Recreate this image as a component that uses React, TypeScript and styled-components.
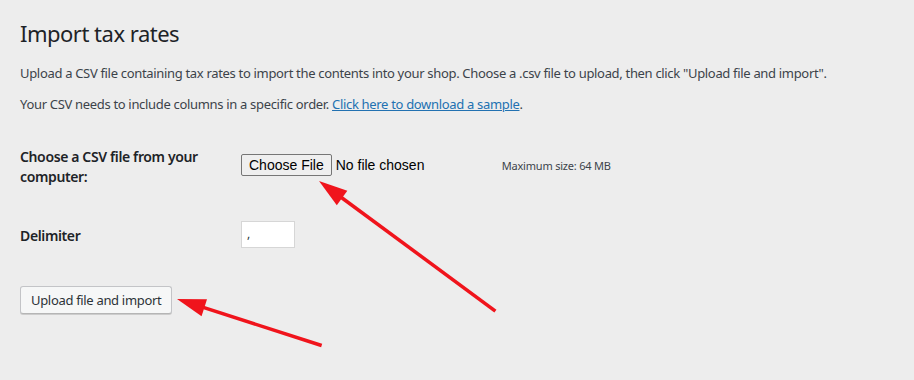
import styled, { createGlobalStyle } from "styled-components";

const GlobalStyle = createGlobalStyle`
  html, body {
    margin: 0;
    padding: 0;
    background: #ededed;
  }
  body {
    font-family: "Noto Sans", "Open Sans", sans-serif;
    color: #1d2327;
  }
`;

const Page = styled.div`
  position: relative;
  width: 914px;
  height: 380px;
  padding: 0 20px;
  box-sizing: border-box;
  overflow: hidden;
`;

const Title = styled.h1`
  margin: 0;
  padding: 19px 0 0;
  font-size: 22px;
  font-weight: 400;
  line-height: 29px;
  letter-spacing: -0.5px;
  color: #1d2327;
`;

const Text = styled.p`
  margin: 16px 0 0;
  font-size: 13px;
  line-height: 18px;
  letter-spacing: -0.32px;
  color: #3c434a;

  & + & {
    margin-top: 13px;
  }

  a {
    color: #2271b1;
  }
`;

const FormTable = styled.div`
  display: grid;
  grid-template-columns: 221px 1fr;
  margin-top: 24px;
  row-gap: 29px;
  align-items: start;
`;

const Label = styled.label`
  font-size: 14px;
  font-weight: 600;
  line-height: 20px;
  letter-spacing: -0.37px;
  color: #1d2327;
  padding-top: 10px;
  width: 200px;
`;

const Field = styled.div<{ $top: number }>`
  display: flex;
  align-items: center;
  padding-top: ${(p) => p.$top}px;
`;

const FileButton = styled.span`
  display: inline-block;
  height: 22px;
  line-height: 20px;
  padding: 0 7px;
  box-sizing: border-box;
  border: 1px solid #767676;
  border-radius: 2px;
  background: #efefef;
  font-family: "Liberation Sans", Arial, sans-serif;
  font-size: 14px;
  color: #000;
`;

const FileName = styled.span`
  margin-left: 4px;
  font-family: "Liberation Sans", Arial, sans-serif;
  font-size: 14px;
  color: #000;
  width: 166px;
`;

const MaxSize = styled.small`
  font-size: 11px;
  letter-spacing: -0.2px;
  color: #3c434a;
`;

const SmallInput = styled.div`
  width: 54px;
  height: 27px;
  box-sizing: border-box;
  border: 1px solid #d6d6d6;
  background: #fff;
  font-size: 12px;
  color: #2c3338;
  padding: 3px 0 0 5px;
`;

const SubmitButton = styled.button`
  margin-top: 38px;
  height: 28px;
  padding: 0 10px;
  border: 1px solid #c3c4c7;
  border-bottom-color: #b5b5b5;
  border-radius: 3px;
  background: #f6f7f7;
  font-family: inherit;
  font-size: 13px;
  letter-spacing: -0.32px;
  color: #2c3338;
  box-shadow: 0 1px 0 #ccc;
`;

const Overlay = styled.svg`
  position: absolute;
  left: 0;
  top: 0;
  pointer-events: none;
`;

const Arrow = ({ x1, y1, x2, y2 }: { x1: number; y1: number; x2: number; y2: number }) => {
  const a = Math.atan2(y2 - y1, x2 - x1);
  const len = 30;
  const spread = 0.3;
  const p1 = [x2 - len * Math.cos(a - spread), y2 - len * Math.sin(a - spread)];
  const p2 = [x2 - len * Math.cos(a + spread), y2 - len * Math.sin(a + spread)];
  const bx = x2 - 22 * Math.cos(a);
  const by = y2 - 22 * Math.sin(a);
  return (
    <g>
      <line x1={x1} y1={y1} x2={bx} y2={by} stroke="#f0141c" strokeWidth={3.5} strokeLinecap="square" />
      <polygon points={`${x2},${y2} ${p1[0]},${p1[1]} ${p2[0]},${p2[1]}`} fill="#f0141c" />
    </g>
  );
};

export default function App() {
  return (
    <>
      <GlobalStyle />
      <Page>
        <Title>Import tax rates</Title>
        <Text>
          Upload a CSV file containing tax rates to import the contents into your shop. Choose a .csv file to
          upload, then click "Upload file and import".
        </Text>
        <Text>
          Your CSV needs to include columns in a specific order. <a href="#">Click here to download a sample</a>.
        </Text>
        <FormTable>
          <Label>Choose a CSV file from your computer:</Label>
          <Field $top={17}>
            <FileButton>Choose File</FileButton>
            <FileName>No file chosen</FileName>
            <MaxSize>Maximum size: 64 MB</MaxSize>
          </Field>
          <Label>Delimiter</Label>
          <Field $top={5}>
            <SmallInput>,</SmallInput>
          </Field>
        </FormTable>
        <SubmitButton>Upload file and import</SubmitButton>
        <Overlay width={914} height={380}>
          <Arrow x1={494} y1={310} x2={319} y2={181} />
          <Arrow x1={320} y1={345} x2={177} y2={299} />
        </Overlay>
      </Page>
    </>
  );
}
